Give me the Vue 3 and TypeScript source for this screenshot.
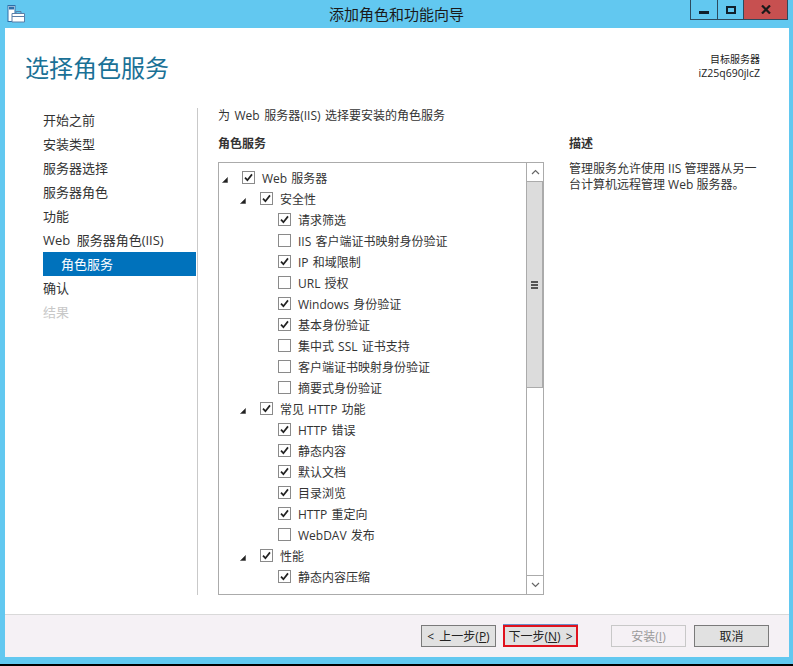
<script setup lang="ts">
interface Row { label: string; level: number; checked: boolean; parent?: boolean }
const nav: { label: string; active?: boolean; disabled?: boolean }[] = [
  { label: '开始之前' },
  { label: '安装类型' },
  { label: '服务器选择' },
  { label: '服务器角色' },
  { label: '功能' },
  { label: 'Web 服务器角色(IIS)' },
  { label: '角色服务', active: true },
  { label: '确认' },
  { label: '结果', disabled: true },
]
const rows: Row[] = [
  { label: 'Web 服务器', level: 0, checked: true, parent: true },
  { label: '安全性', level: 1, checked: true, parent: true },
  { label: '请求筛选', level: 2, checked: true },
  { label: 'IIS 客户端证书映射身份验证', level: 2, checked: false },
  { label: 'IP 和域限制', level: 2, checked: true },
  { label: 'URL 授权', level: 2, checked: false },
  { label: 'Windows 身份验证', level: 2, checked: true },
  { label: '基本身份验证', level: 2, checked: true },
  { label: '集中式 SSL 证书支持', level: 2, checked: false },
  { label: '客户端证书映射身份验证', level: 2, checked: false },
  { label: '摘要式身份验证', level: 2, checked: false },
  { label: '常见 HTTP 功能', level: 1, checked: true, parent: true },
  { label: 'HTTP 错误', level: 2, checked: true },
  { label: '静态内容', level: 2, checked: true },
  { label: '默认文档', level: 2, checked: true },
  { label: '目录浏览', level: 2, checked: true },
  { label: 'HTTP 重定向', level: 2, checked: true },
  { label: 'WebDAV 发布', level: 2, checked: false },
  { label: '性能', level: 1, checked: true, parent: true },
  { label: '静态内容压缩', level: 2, checked: true },
]
</script>

<template>
  <div class="window">
    <header class="titlebar">
      <svg class="appicon" width="18" height="18" viewBox="0 0 18 18">
        <rect x="1" y="0.5" width="7" height="16" fill="#fff" stroke="#2f6fa8" />
        <rect x="2" y="1.5" width="5" height="3" fill="#2f6fa8" />
        <path d="M5 8.5h12.5v8.5H5z" fill="#fff" stroke="#5a7fa8" />
        <path d="M5 11.5h12.5" stroke="#5a7fa8" />
        <path d="M9 8.5V6.5h5v2" fill="none" stroke="#5a7fa8" />
      </svg>
      <div class="wintitle">添加角色和功能向导</div>
      <div class="winbtns">
        <div class="wb wb-min"><span class="g-min"></span></div>
        <div class="wb wb-max"><span class="g-max"></span></div>
        <div class="wb wb-close">
          <svg width="10" height="9" viewBox="0 0 10 9"><path d="M1 0.5l8 8M9 0.5l-8 8" stroke="#1a1a1a" stroke-width="2.2" /></svg>
        </div>
      </div>
    </header>

    <div class="client">
      <div class="head">
        <h1 class="title">选择角色服务</h1>
        <div class="target">
          <div>目标服务器</div>
          <div class="host">iZ25q690jlcZ</div>
        </div>
      </div>

      <div class="body">
        <nav class="nav">
          <div
            v-for="n in nav"
            :key="n.label"
            class="navitem"
            :class="{ active: n.active, disabled: n.disabled }"
          >{{ n.label }}</div>
        </nav>

        <main class="content">
          <p class="lead">为 Web 服务器(IIS) 选择要安装的角色服务</p>
          <div class="cols">
            <section class="left">
              <h2 class="sub">角色服务</h2>
              <div class="tree">
                <div class="rows">
                  <div
                    v-for="r in rows"
                    :key="r.label"
                    class="row"
                    :class="'lv' + r.level"
                  >
                    <svg v-if="r.parent" class="arrow" width="6" height="6" viewBox="0 0 6 6">
                      <path d="M5.5 0.5V5.5H0.5z" fill="#222" stroke="#444" stroke-width="0.6" />
                    </svg>
                    <span class="cb">
                      <svg v-if="r.checked" width="11" height="11" viewBox="0 0 11 11">
                        <path d="M2 5.6l2.4 2.6L9 2.4" fill="none" stroke="#222" stroke-width="1.7" />
                      </svg>
                    </span>
                    <span class="lbl">{{ r.label }}</span>
                  </div>
                </div>
                <div class="sb">
                  <div class="sbbtn">
                    <svg width="9" height="6" viewBox="0 0 9 6"><path d="M1 5l3.5-3.5L8 5" fill="none" stroke="#666" stroke-width="1.2" /></svg>
                  </div>
                  <div class="thumb"><span class="grip"></span></div>
                  <div class="track"></div>
                  <div class="sbbtn sbbtn-down">
                    <svg width="9" height="6" viewBox="0 0 9 6"><path d="M1 1l3.5 3.5L8 1" fill="none" stroke="#666" stroke-width="1.2" /></svg>
                  </div>
                </div>
              </div>
            </section>
            <aside class="desc">
              <h2 class="sub">描述</h2>
              <p class="desctext">管理服务允许使用 IIS 管理器从另一台计算机远程管理 Web 服务器。</p>
            </aside>
          </div>
        </main>
      </div>

      <footer class="foot">
        <button class="btn">&lt; 上一步(<u>P</u>)</button>
        <button class="btn btn-next">下一步(<u>N</u>) &gt;</button>
        <button class="btn btn-off">安装(<u>I</u>)</button>
        <button class="btn">取消</button>
      </footer>
    </div>
    <div class="edge"></div>
  </div>
</template>

<style>
html, body { margin: 0; padding: 0; background: #000; }
</style>

<style scoped>
.window {
  width: 793px;
  height: 666px;
  display: flex;
  flex-direction: column;
  background: #62c8f0;
  font-family: "Open Sans", "Noto Sans CJK SC", sans-serif;
  font-size: 12px;
  color: #333;
  overflow: hidden;
}
.titlebar {
  height: 28px;
  flex: none;
  display: flex;
  align-items: flex-start;
  position: relative;
}
.appicon { margin: 5px 0 0 7px; }
.wintitle {
  position: absolute;
  left: 329px;
  top: 2px;
  width: 135px;
  font-size: 15px;
  line-height: 24px;
  text-align: center;
  color: #1a1a1a;
  white-space: nowrap;
}
.winbtns {
  margin-left: auto;
  margin-right: 5px;
  display: flex;
  height: 20px;
  border: 1px solid #2c4a5e;
  border-top: 0;
  box-sizing: border-box;
}
.wb {
  display: flex;
  align-items: center;
  justify-content: center;
  height: 19px;
  box-sizing: border-box;
}
.wb-min { width: 27px; border-right: 1px solid #2c4a5e; }
.wb-max { width: 26px; border-right: 1px solid #2c4a5e; }
.wb-close { width: 43px; background: #c75050; }
.g-min { width: 10px; height: 3px; background: #10202c; margin-top: 5px; }
.g-max { border: 2px solid #10202c; box-sizing: content-box; width: 6px; height: 4px; }
.client {
  flex: none;
  height: 629px;
  margin: 0 4px 0 5px;
  background: #fff;
  display: flex;
  flex-direction: column;
}
.edge {
  flex: none;
  height: 9px;
  box-sizing: border-box;
  border-bottom: 2px solid #000;
}
.head {
  height: 80px;
  flex: none;
  display: flex;
  justify-content: space-between;
  box-sizing: border-box;
  padding: 0 29px 0 20px;
}
.title {
  margin: 22px 0 0;
  font-size: 24px;
  line-height: 36px;
  font-weight: 400;
  color: #1a7196;
}
.target {
  margin-top: 24px;
  text-align: right;
  font-size: 10px;
  line-height: 14px;
  color: #222;
}
.host { font-size: 10.5px; }
.body {
  flex: 1;
  display: flex;
  min-height: 0;
}
.nav {
  width: 153px;
  margin-left: 38px;
  flex: none;
}
.navitem {
  height: 24px;
  line-height: 24px;
  font-size: 13px;
  color: #333;
  white-space: nowrap;
  word-spacing: 3px;
}
.navitem.active {
  background: #0072bc;
  color: #fff;
  padding-left: 18px;
}
.navitem.disabled { color: #c8c8c8; }
.content {
  flex: 1;
  margin-left: 1px;
  padding-left: 21px;
  position: relative;
  min-width: 0;
}
.content::before {
  content: "";
  position: absolute;
  left: 0;
  top: 0;
  width: 1px;
  height: 487px;
  background: #c9c9c9;
}
.lead {
  margin: 0;
  font-size: 12px;
  line-height: 16px;
  color: #333;
  white-space: nowrap;
  word-spacing: 1.4px;
}
.cols {
  display: flex;
  margin-top: 12px;
}
.left { width: 326px; flex: none; }
.sub {
  margin: 0;
  font-size: 12px;
  line-height: 16px;
  font-weight: 700;
  color: #333;
}
.tree {
  margin-top: 10px;
  height: 433px;
  box-sizing: border-box;
  border: 1px solid #ababab;
  display: flex;
  overflow: hidden;
}
.rows {
  flex: 1;
  min-width: 0;
  padding-top: 4px;
  overflow: hidden;
}
.row {
  height: 21px;
  display: flex;
  align-items: center;
  position: relative;
  white-space: nowrap;
}
.lv0 { padding-left: 23px; }
.lv1 { padding-left: 41px; }
.lv2 { padding-left: 59px; }
.arrow { position: absolute; top: 10px; }
.lv0 .arrow { left: 3px; }
.lv1 .arrow { left: 21px; }
.cb {
  width: 13px;
  height: 13px;
  box-sizing: border-box;
  border: 1px solid #8a8a8a;
  background: #fff;
  display: flex;
  align-items: center;
  justify-content: center;
  flex: none;
}
.lbl {
  margin-left: 7px;
  font-size: 12px;
  color: #333;
  word-spacing: 1px;
}
.sb {
  width: 17px;
  flex: none;
  display: flex;
  flex-direction: column;
  border-left: 1px solid #ababab;
  box-sizing: border-box;
}
.sbbtn {
  height: 18px;
  flex: none;
  display: flex;
  align-items: center;
  justify-content: center;
  background: #fff;
}
.sbbtn-down { border-top: 1px solid #ababab; }
.thumb {
  height: 207px;
  flex: none;
  background: #dcdcdc;
  border: 1px solid #ababab;
  border-left: 0;
  box-sizing: border-box;
  display: flex;
  align-items: center;
  justify-content: center;
}
.grip {
  width: 7px;
  height: 8px;
  background: repeating-linear-gradient(#555 0, #555 2px, transparent 2px, transparent 3px);
}
.track { flex: 1; background: #fff; }
.desc { margin-left: 25px; width: 190px; flex: none; }
.desctext {
  margin: 9px 0 0;
  font-size: 12px;
  line-height: 16px;
  color: #333;
  width: 195px;
}
.foot {
  height: 43px;
  flex: none;
  box-sizing: border-box;
  border-top: 1px solid #d9d9d9;
  background: #f5f1f5;
  display: flex;
  align-items: flex-start;
  padding: 10px 19px 0 416px;
}
.btn {
  width: 75px;
  height: 22px;
  box-sizing: border-box;
  border: 1px solid #7a7a7a;
  background: #e1e1e1;
  font: inherit;
  font-size: 12px;
  color: #222;
  padding: 0;
  margin-left: 8px;
  white-space: nowrap;
  word-spacing: 2px;
}
.btn:first-child { margin-left: 0; }
.btn-next {
  margin-left: 7px;
  border: 2px solid #e0121e;
  box-shadow: 0 -1px 0 #6a8fc8;
}
.btn-off {
  margin-left: 33px;
  background: #f5f1f5;
  border-color: #c8c8c8;
  color: #9a9a9a;
}
</style>
